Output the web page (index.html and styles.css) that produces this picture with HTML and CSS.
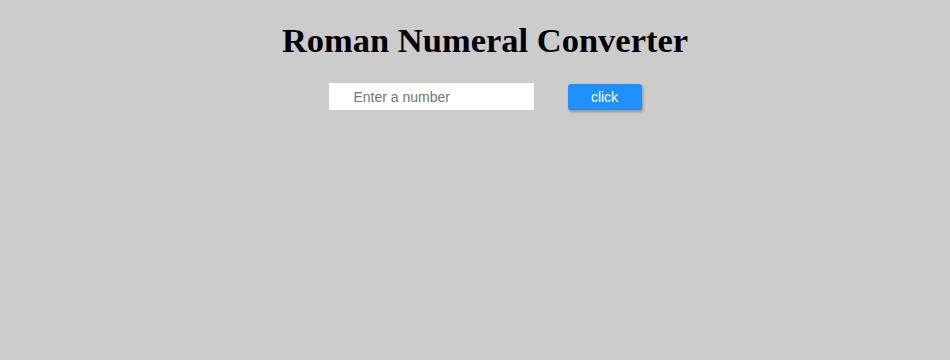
FILE: index.html
```html
<!DOCTYPE html>
<html>
<head>
<meta charset="utf-8">
<link rel="stylesheet" href="styles.css">
</head>
<body>
<main class="page">
  <h1 class="title">Roman Numeral Converter</h1>
  <div class="form">
    <input class="number-input" type="text" placeholder="Enter a number">
    <button class="convert-btn">click</button>
  </div>
</main>
</body>
</html>
```
FILE: styles.css
```css
html, body {
  margin: 0;
  height: 100%;
  background: #cccccc;
}
.page {
  display: flex;
  flex-direction: column;
  align-items: center;
  padding-left: 20px;
  font-family: "Liberation Serif", serif;
}
.title {
  margin: 19px 0 0;
  font-size: 34.5px;
  font-weight: bold;
  color: #000;
  line-height: 42px;
}
.form {
  display: flex;
  align-items: center;
  gap: 34px;
  margin-top: 22px;
}
.number-input {
  box-sizing: border-box;
  width: 205px;
  height: 27px;
  border: none;
  outline: none;
  background: #fff;
  padding: 0 0 0 25px;
  font-family: "Liberation Sans", Arial, sans-serif;
  font-size: 14px;
  color: #333;
}
.number-input::placeholder {
  color: #757575;
}
.convert-btn {
  box-sizing: border-box;
  width: 74px;
  height: 26px;
  margin-top: 1px;
  border: none;
  border-radius: 3px;
  background: #1e90ff;
  color: #fff;
  font-family: "Liberation Sans", Arial, sans-serif;
  font-size: 14px;
  box-shadow: 1px 2px 3px rgba(0,0,0,0.3);
  cursor: pointer;
}
```
